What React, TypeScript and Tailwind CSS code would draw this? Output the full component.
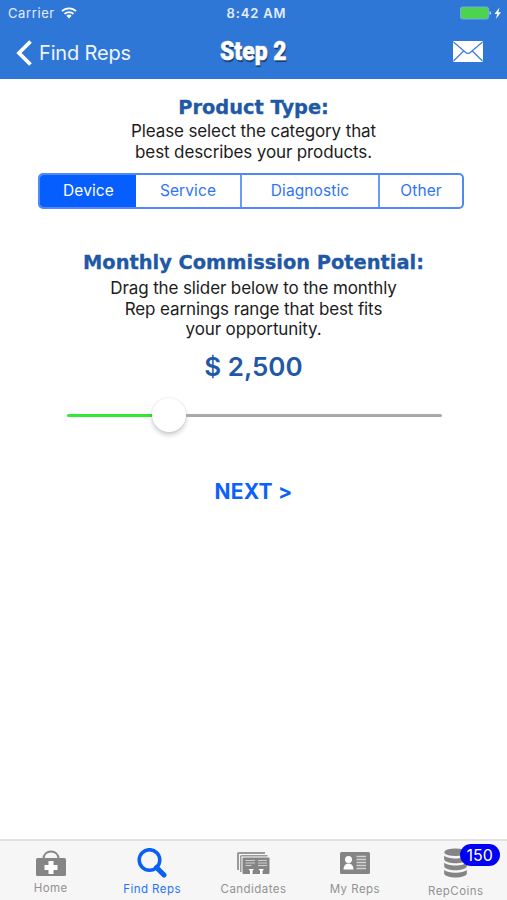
import type { ReactNode } from 'react';

const segments = [
  { label: 'Device', box: 'w-[96px] bg-[#065eff] pl-px text-white' },
  { label: 'Service', box: 'w-[104px] text-[#2f74f5]' },
  { label: 'Diagnostic', box: 'w-[138px] border-l-2 border-[#6a9bf5] text-[#2f74f5]' },
  { label: 'Other', box: 'flex-1 border-l-2 border-[#6a9bf5] text-[#2f74f5]' },
];

function StatusBar() {
  return (
    <div className="grid h-[28px] grid-cols-3 items-center pl-2 pr-[5px] text-[13px] text-[#e4edfb]">
      <div className="flex items-center gap-[6px]">
        <span className="tracking-[0.6px]">Carrier</span>
        <svg className="-mt-[2px]" width="16" height="12" viewBox="0 0 16 12" fill="none" stroke="white" strokeWidth="1.8">
          <path d="M1 4.2a10 10 0 0 1 14 0" />
          <path d="M3.5 6.9a6.4 6.4 0 0 1 9 0" />
          <path d="M5.4 8.8a3.7 3.7 0 0 1 5.2 0L8 11.6Z" fill="white" stroke="none" />
        </svg>
      </div>
      <span className="pl-[3px] text-center font-semibold tracking-[0.85px]">8:42 AM</span>
      <svg className="-mt-[2px] justify-self-end" width="42" height="14" viewBox="0 0 42 14">
        <rect x="0.5" y="1" width="28" height="12" rx="2" fill="#4bd44f" stroke="#78a9dc" />
        <path d="M29.5 5v4c2 0 2-4 0-4" fill="#b5d3f5" />
        <path d="M39.5 1.5 34.5 8h2.8l-1.5 5L41 6.2h-2.7Z" fill="white" />
      </svg>
    </div>
  );
}

function NavBar() {
  return (
    <div className="grid h-[49px] grid-cols-3 items-center pl-4 pr-6">
      <div className="flex items-center gap-[7px] text-white">
        <svg width="16" height="26" viewBox="0 0 16 26" fill="none" stroke="white" strokeWidth="3.8">
          <path d="M14.5 1.5 3 13l11.5 11.5" />
        </svg>
        <span className="whitespace-nowrap text-[20px] tracking-[-0.15px] text-[#eef4fd]">Find Reps</span>
      </div>
      <h1 className="-mt-[3px] origin-center scale-x-[0.88] justify-self-center whitespace-nowrap pl-[9px] font-['Roboto',sans-serif] text-[26px] font-black leading-7 text-white [text-shadow:1px_1.5px_1px_#183a6b] [-webkit-text-stroke:0.5px_white]">
        Step 2
      </h1>
      <svg className="-mt-[3px] justify-self-end" width="30" height="21" viewBox="0 0 30 21">
        <rect width="30" height="21" rx="1" fill="white" />
        <path d="m.5 1 11.6 10c2 1.9 3.8 1.9 5.8 0L29.5 1M.5 20l10.2-10M29.5 20 19.3 10" fill="none" stroke="#3b7bd8" strokeWidth="1.2" />
      </svg>
    </div>
  );
}

function Heading({ children }: { children: ReactNode }) {
  return (
    <h2 className="whitespace-nowrap text-center font-['DejaVu_Sans',sans-serif] text-[19.4px] font-bold leading-6 text-[#2158a6] [-webkit-text-stroke:0.3px_#2158a6]">
      {children}
    </h2>
  );
}

function HomeIcon() {
  return (
    <svg width="30" height="26" viewBox="0 0 30 26">
      <path d="M7.500 9C7.500 4 11 1.500 15 1.500S22.500 4 22.500 9" fill="none" stroke="#858585" strokeWidth="2" />
      <rect y="8" width="30" height="18" rx="1.5" fill="#858585" />
      <path d="M12.5 11h5v4h4v5h-4v4h-5v-4h-4v-5h4Z" fill="white" />
    </svg>
  );
}

function SearchIcon() {
  return (
    <svg width="30" height="30" viewBox="0 0 30 30" fill="none" stroke="#0a5ff5">
      <circle cx="12.5" cy="12" r="10.3" strokeWidth="3.5" />
      <path d="m19.5 19.5 7.5 7.5" strokeWidth="5" strokeLinecap="round" />
    </svg>
  );
}

function CandidatesIcon() {
  return (
    <svg width="33" height="22" viewBox="0 0 33 22">
      <path d="M0 18V1.500Q0 0 1.500 0H28V2H2V18ZM3 20V4.500Q3 3 4.500 3H30.500V4.500H4.500V20Z" fill="#9a9a9a" />
      <rect x="5.5" y="5.500" width="27" height="16.500" rx="1" fill="#858585" />
      <path d="M8.500 8.500h9.500M8.500 11h9.500M8.500 13.500h6M21 8.500h9M21 11h9M21 13.500h9" stroke="#cfcfcf" strokeWidth="1.2" />
      <path d="M11.500 17h5.500l-1.500 1.800V22h-2.500v-3.200ZM21.500 17h5.500l-1.500 1.800V22H23v-3.200Z" fill="white" />
    </svg>
  );
}

function CardIcon() {
  return (
    <svg width="30" height="22" viewBox="0 0 30 22">
      <rect width="30" height="22" rx="1.5" fill="#858585" />
      <circle cx="8.5" cy="7.5" r="3.5" fill="white" />
      <path d="M3.500 17.500c0-8 10-8 10 0Z" fill="white" />
      <path d="M16.500 4.500h9.500M16.500 7.500h9.500M16.500 10.500h9.500M16.500 13.500h9.500M16.500 16.500h9.500" stroke="#d2d2d2" strokeWidth="1.5" />
    </svg>
  );
}

function CoinsIcon() {
  return (
    <svg width="23" height="30" viewBox="0 0 23 30" fill="#858585">
      <ellipse cx="11.5" cy="4.3" rx="11.3" ry="3.8" />
      <path d="M.2 7.500c3 4 19.600 4 22.600 0v4c-2 5-20.600 5-22.600 0Z" />
      <path d="M.2 14.500c3 4 19.600 4 22.600 0v4c-2 5-20.600 5-22.600 0Z" />
      <path d="M.2 21.800c3 4 19.600 4 22.600 0v4c-2 5-20.600 5-22.600 0Z" />
    </svg>
  );
}

const tabs = [
  { label: 'Home', icon: <HomeIcon />, box: 'pt-[10px] text-[#929292]', text: 'mt-[4px]' },
  { label: 'Find Reps', icon: <SearchIcon />, box: 'pt-[8px] text-[#2474f6]', text: 'mt-[3px]' },
  { label: 'Candidates', icon: <CandidatesIcon />, box: 'pt-[12px] text-[#929292]', text: 'mt-[7px]' },
  { label: 'My Reps', icon: <CardIcon />, box: 'pt-[12px] text-[#929292]', text: 'mt-[7px]' },
  { label: 'RepCoins', icon: <CoinsIcon />, box: 'pt-[8px] pr-px text-[#929292]', text: 'mt-[5px]' },
];

export default function App() {
  return (
    <div className="flex h-[900px] w-[507px] flex-col overflow-hidden bg-white font-['Inter',sans-serif]">
      <header className="h-[79px] bg-[#2f77d6]">
        <StatusBar />
        <NavBar />
      </header>

      <main className="flex flex-1 flex-col items-center pt-[17px]">
        <Heading>Product Type:</Heading>
        <p className="mt-px text-center text-[17px] leading-[20.5px] tracking-[-0.12px] text-[#1c1c1c]">
          Please select the category that
          <br />
          best describes your products.
        </p>

        <div className="mr-[5px] mt-[11px] flex h-[36px] w-[426px] overflow-hidden rounded-[5px] border-2 border-[#4f89f5] text-[15.5px] tracking-[0.1px]">
          {segments.map((s) => (
            <button key={s.label} className={`flex items-center justify-center ${s.box}`}>
              {s.label}
            </button>
          ))}
        </div>

        <div className="mt-[42px]">
          <Heading>Monthly Commission Potential:</Heading>
        </div>
        <p className="mt-[3px] text-center text-[17px] leading-[20.5px] tracking-[-0.12px] text-[#1c1c1c]">
          Drag the slider below to the monthly
          <br />
          Rep earnings range that best fits
          <br />
          your opportunity.
        </p>
        <div className="mt-[11px] text-[26px] font-semibold leading-8 text-[#2158a6]">$ 2,500</div>

        <div className="ml-px mt-[16px] flex h-[34px] w-[375px] items-center">
          <div className="h-[3px] w-[85px] rounded-l-full bg-[#31e832]" />
          <div className="-mt-[1px] size-[34px] rounded-full bg-white shadow-[0_3px_5px_rgba(0,0,0,0.2),0_0_2px_rgba(0,0,0,0.1)]" />
          <div className="h-[2.5px] flex-1 rounded-r-full bg-[#a9a9a9]" />
        </div>

        <button className="mt-[43px] text-[21px] font-bold leading-8 tracking-[0.2px] text-[#0b61fa]">NEXT &gt;</button>
      </main>

      <nav className="grid h-[61px] grid-cols-5 border-t-2 border-[#e2e2e2] bg-[#f6f6f6]">
        {tabs.map((t) => (
          <div key={t.label} className={`relative -mt-px flex flex-col items-center ${t.box}`}>
            {t.icon}
            <span className={`whitespace-nowrap text-[11.5px] leading-4 tracking-[0.45px] ${t.text}`}>{t.label}</span>
            {t.label === 'RepCoins' && (
              <span className="absolute left-[54px] top-[4px] flex h-[22px] w-[40px] items-center justify-center rounded-full bg-[#0000f4] text-[16px] text-white">
                150
              </span>
            )}
          </div>
        ))}
      </nav>
    </div>
  );
}
